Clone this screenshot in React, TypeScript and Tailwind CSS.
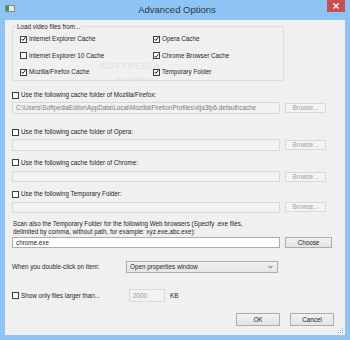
import React from 'react';

const Check: React.FC<{ checked?: boolean }> = ({ checked }) => (
  <span className="w-[7px] h-[7px] border border-[#3c3c3c] bg-white flex items-center justify-center shrink-0">
    {checked && (
      <svg width="6" height="6" viewBox="0 0 6 6">
        <path d="M0.8 3.1 L2.3 4.7 L5.3 0.9" fill="none" stroke="#111" strokeWidth="1.2" />
      </svg>
    )}
  </span>
);

const CheckRow: React.FC<{ label: string; checked?: boolean; className?: string }> = ({ label, checked, className }) => (
  <div className={`flex items-center h-[8px] ${className ?? ''}`}>
    <Check checked={checked} />
    <span className="ml-[2px] whitespace-nowrap">{label}</span>
  </div>
);

const Btn: React.FC<{ label: string; disabled?: boolean; className?: string }> = ({ label, disabled, className }) => (
  <div
    className={`flex items-center justify-center border ${
      disabled
        ? 'border-[#d9d9d9] bg-[#f4f4f4] text-[#a3a3a3]'
        : 'border-[#acacac] bg-gradient-to-b from-[#f2f2f2] to-[#e3e3e3] text-[#222]'
    } ${className ?? ''}`}
  >
    {label}
  </div>
);

const FolderBox: React.FC<{ value?: string; className?: string }> = ({ value, className }) => (
  <div className={`flex items-center gap-[5px] ${className ?? ''}`}>
    <div className="w-[268px] h-full border border-[#d9d9d9] bg-[#f2f2f2] text-[#7a7a7a] pl-[3px] flex items-center whitespace-nowrap overflow-hidden">
      {value}
    </div>
    <Btn label="Browse..." disabled className="w-[41px] h-[10px]" />
  </div>
);

const App: React.FC = () => {
  return (
    <div className="w-[350px] h-[340px] bg-[#8fc3f3] flex flex-col font-['Liberation_Sans',Arial,sans-serif]">
      <div className="h-[20px] grid grid-cols-[1fr_auto_1fr] items-start">
        <div className="pl-[5px] pt-[5px]">
          <div className="w-[10px] h-[7px] border border-[#8a8a8a] bg-[#e8e8e8] flex">
            <div className="w-[3px] h-full bg-[#3a9a5a]" />
          </div>
        </div>
        <div className="text-[9.5px] text-[#2b3848] pt-[3px] ml-[4px]">
          Advanced Options
        </div>
        <div className="flex justify-end pr-[5px]">
          <div className="w-[18px] h-[12px] bg-[#c75050] flex items-center justify-center">
            <svg width="6" height="6" viewBox="0 0 6 6">
              <path d="M0.5 0.5 L5.5 5.5 M5.5 0.5 L0.5 5.5" stroke="#fff" strokeWidth="1.4" />
            </svg>
          </div>
        </div>
      </div>

      <div className="mx-[5px] h-[315px] bg-[#f0f0f0] relative text-[6.3px] text-[#1e1e1e] leading-[8px]">
        {/* watermark */}
        <div className="absolute left-[95px] top-[42px] text-[9px] font-bold text-[#e4e4e4] tracking-[1px] pointer-events-none">
          SOFTPEDIA
        </div>
        <div className="absolute left-[110px] top-[57px] text-[4.5px] leading-[5px] text-[#e0e0e0] pointer-events-none">
          www.softpedia.com
        </div>

        {/* group */}
        <div className="pt-[6px] pl-[7px]">
          <div className="relative w-[272px] h-[55px] border border-[#dcdcdc] rounded-[2px]">
            <span className="absolute -top-[4px] left-[3px] bg-[#f0f0f0] px-[1px]">Load video files from...</span>
            <div className="grid grid-cols-[133px_1fr] pl-[7px] pt-[8px] gap-y-[8.7px]">
              <CheckRow label="Internet Explorer Cache" checked />
              <CheckRow label="Opera Cache" checked />
              <CheckRow label="Internet Explorer  10 Cache" />
              <CheckRow label="Chrome Browser Cache" checked />
              <CheckRow label="Mozilla/Firefox Cache" checked />
              <CheckRow label="Temporary Folder" checked />
            </div>
          </div>
        </div>

        <div className="px-[7px]">
          <CheckRow label="Use the following cache folder of Mozilla/Firefox:" className="mt-[10px]" />
          <FolderBox
            value="C:\Users\SoftpediaEditor\AppData\Local\Mozilla\Firefox\Profiles\xlja3fp6.default\cache"
            className="mt-[3px] h-[12px]"
          />
          <CheckRow label="Use the following cache folder of Opera:" className="mt-[14px]" />
          <FolderBox className="mt-[3px] h-[11.5px]" />
          <CheckRow label="Use the following cache folder of Chrome:" className="mt-[8px]" />
          <FolderBox className="mt-[4.5px] h-[11px]" />
          <CheckRow label="Use the following Temporary Folder:" className="mt-[8px]" />
          <FolderBox className="mt-[3.5px] h-[11px]" />

          <div className="mt-[7px] pl-[1px]">
            Scan also the Temporary Folder for the following Web browsers (Specify .exe files,
            <br />
            delimited by comma, without path, for example: xyz.exe,abc.exe):
          </div>
          <div className="flex items-center gap-[5px] mt-[1.5px] h-[11px]">
            <div className="w-[268px] h-full border border-[#abadb3] bg-white pl-[3px] flex items-center">chrome.exe</div>
            <Btn label="Choose" className="w-[47px] h-[11px]" />
          </div>

          <div className="flex items-center mt-[13px] h-[12px]">
            <span className="w-[114px]">When you double-click on item:</span>
            <div className="w-[152px] h-full border border-[#acacac] bg-gradient-to-b from-[#f0f0f0] to-[#e6e6e6] flex items-center justify-between pl-[3px] pr-[4px]">
              <span>Open properties window</span>
              <svg width="5" height="4" viewBox="0 0 5 4">
                <path d="M0.5 0.8 L2.5 3 L4.5 0.8" fill="none" stroke="#444" strokeWidth="0.9" />
              </svg>
            </div>
          </div>

          <div className="flex items-center mt-[16px] h-[13px]">
            <div className="w-[117px]">
              <CheckRow label="Show only files larger than..." />
            </div>
            <div className="w-[36px] h-full border border-[#d9d9d9] bg-[#f2f2f2] text-[#9a9a9a] pl-[3px] flex items-center">2000</div>
            <span className="ml-[5px]">KB</span>
          </div>

          <div className="flex justify-end gap-[10px] mt-[11px] pr-[4px]">
            <Btn label="OK" className="w-[44px] h-[13px]" />
            <Btn label="Cancel" className="w-[44px] h-[13px]" />
          </div>
        </div>

        {/* resize grip */}
        <svg className="absolute right-[1px] bottom-[1px]" width="7" height="7" viewBox="0 0 7 7">
          <g fill="#a8a8a8">
            <rect x="5" y="1" width="1" height="1" />
            <rect x="3" y="3" width="1" height="1" />
            <rect x="5" y="3" width="1" height="1" />
            <rect x="1" y="5" width="1" height="1" />
            <rect x="3" y="5" width="1" height="1" />
            <rect x="5" y="5" width="1" height="1" />
          </g>
        </svg>
      </div>
    </div>
  );
};

export default App;
